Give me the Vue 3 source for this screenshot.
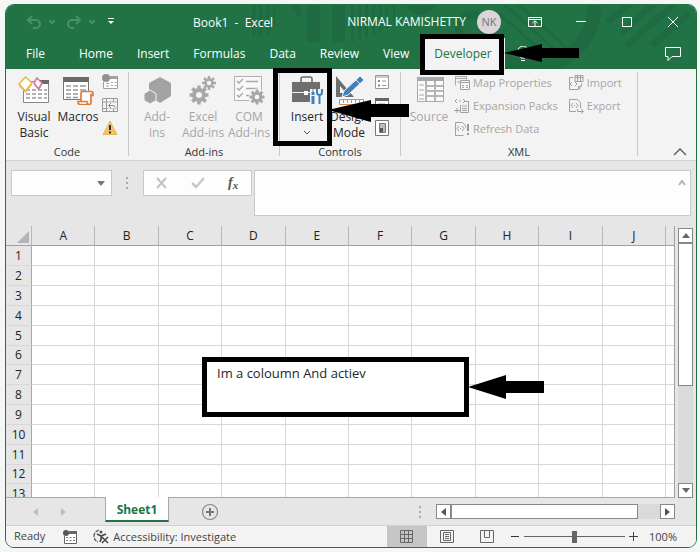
<script setup>
import { ref } from 'vue'

const tabs = ['File', 'Home', 'Insert', 'Formulas', 'Data', 'Review', 'View', 'Developer']
const activeTab = ref('Developer')
const columns = 'ABCDEFGHIJ'.split('')
const rows = Array.from({ length: 13 }, (_, i) => i + 1)
const cellName = ref('')
const formula = ref('')
const zoom = ref(50)
const gear = [0, 45, 90, 135]
</script>

<template>
  <main class="page">
    <div class="window">
      <header class="chrome">
        <svg class="pattern" viewBox="0 0 692 65" preserveAspectRatio="xMinYMin slice" aria-hidden="true">
          <g fill="#1f6a41">
            <path d="M247 0h3v32h-3zM254 0h3v32h-3zM261 0h3v32h-3zM268 0h2v20h-2zM284 0h12v14zM302 0h13v37h-13zM327 0h13v37h-13zM346 0h3v37h-3zM353 0h3v35h-3zM360 0h3v33h-3zM367 0h3v30h-3zM374 0h3v27h-3zM381 0h2v24h-2zM388 0h2v20h-2zM402 0h28q-4 10-14 10t-14-10z" />
            <path d="M618 0h10l-22 19-5-4zM644 0h9l-33 30-5-4zM664 0h10l-50 44-5-5zM683 6l4 5-36 32-6-5z" />
          </g>
          <g fill="none" stroke="#1f6a41">
            <path d="M598 0a62 62 0 0 1-90 56" stroke-width="14" transform="translate(-8)" />
            <path d="M500 0l56 50M510 -4l58 52M495 9l48 42" stroke-width="3" />
            <circle cx="467" cy="23" r="13" stroke-width="8" />
          </g>
        </svg>

        <div class="titlebar">
          <div class="quick">
            <button aria-label="Undo" class="dim"><svg width="16" height="14" viewBox="0 0 16 14"><path d="M6 1L2 5l4 4M2 5h8a4 4 0 0 1 0 8H7" /></svg></button>
            <button aria-label="Undo history" class="dim"><svg width="6" height="4" viewBox="0 0 6 4"><path d="M0 0l3 3 3-3" /></svg></button>
            <button aria-label="Redo" class="dim"><svg width="16" height="14" viewBox="0 0 16 14"><path d="M10 1l4 4-4 4M14 5H6a4 4 0 0 0 0 8h2" /></svg></button>
            <button aria-label="Redo history" class="dim"><svg width="6" height="4" viewBox="0 0 6 4"><path d="M0 0l3 3 3-3" /></svg></button>
            <button aria-label="Customize toolbar" class="custom"><svg width="6" height="7" viewBox="0 0 6 7"><path d="M0 .5h6" /><path d="M0 3h6L3 6z" fill="#fff" stroke="none" /></svg></button>
          </div>
          <h1 class="doc">Book1&nbsp; -&nbsp; Excel</h1>
          <div class="account">
            <span>NIRMAL KAMISHETTY</span>
            <button class="avatar">NK</button>
          </div>
          <div class="controls">
            <button aria-label="Ribbon display options"><svg width="14" height="12" viewBox="0 0 14 12"><path d="M.5 1.500h13v9H.5zM.5 3.500h13M7 10V5M4.500 7L7 4.800 9.500 7" /></svg></button>
            <button aria-label="Minimize"><svg width="12" height="12" viewBox="0 0 12 12"><path d="M1 5.500h10" /></svg></button>
            <button aria-label="Maximize"><svg width="12" height="12" viewBox="0 0 12 12"><path d="M1.500 1.500h9v9h-9z" /></svg></button>
            <button aria-label="Close"><svg width="12" height="12" viewBox="0 0 12 12"><path d="M1 1l10 10M11 1L1 11" /></svg></button>
          </div>
        </div>

        <nav class="tabs" aria-label="Ribbon tabs">
          <button v-for="t in tabs" :key="t" :class="{ active: t === activeTab }" @click="activeTab = t">{{ t }}</button>
          <button class="tell" aria-label="Tell me"><svg width="12" height="16" viewBox="0 0 12 16"><path d="M4 12V10Q1 8 1 5a5 5 0 0 1 10 0q0 3-3 5v2zM4 14.500h4" /></svg></button>
          <button class="comment" aria-label="Comments"><svg width="18" height="16" viewBox="0 0 18 16"><path d="M1.500 1.500h15v9H8l-4 4v-4H1.500z" /></svg></button>
        </nav>
      </header>

      <section class="ribbon" aria-label="Developer">
        <div class="group code">
          <div class="tools">
            <button class="big">
              <svg width="32" height="29" viewBox="0 0 32 29">
                <path d="M5.500 5.500h25v21h-25z" fill="#fff" stroke="#8a8a8a" />
                <path d="M22 4h9v4h-9z" fill="#6b6b6b" />
                <path d="M8 14h4M14 14h4M20 14h4M26 14h3M8 18h4M14 18h4M20 18h4M26 18h3M8 22h4M14 22h4M20 22h4M26 22h3" stroke="#9a9a9a" stroke-width="1.500" />
                <path d="M1 8l6.500 7L14 7v2l-6.500 8L1 10z" fill="#e8bd58" />
                <path d="M7.500 1l6.500 6-6.500 8L1 8z" fill="#fff" stroke="#e8b84a" stroke-width="1.600" />
                <path d="M16 7l5 5 3-5v2l-3 5-5-5z" fill="#df819d" />
                <path d="M19 2l5 5-3.500 6L16 7z" fill="#fff" stroke="#d97593" stroke-width="1.500" />
              </svg>
              <span>Visual<br />Basic</span>
            </button>
            <button class="big">
              <svg width="32" height="29" viewBox="0 0 32 29">
                <path d="M1.500 2.500h25v21h-25z" fill="#fff" stroke="#777" />
                <path d="M1 1h26v5H1z" fill="#6b6b6b" />
                <path d="M4 10h5M11 10h5M18 10h6M4 14h5M11 14h5M18 14h6M4 18h5M11 18h5M4 21.500h5M11 21.500h5" stroke="#999" stroke-width="1.500" />
                <path d="M20.500 15.500h9q1.500 0 1.500 2v2h-2v7q0 2-2 2h-9q-2 0-2-3h3v-8q0-2 1.500-2z" fill="#fff" stroke="#e07b35" stroke-width="1.700" />
                <path d="M19 25.500h6q0 3 2 3M29 19.500v-2" fill="none" stroke="#e07b35" stroke-width="1.500" />
              </svg>
              <span>Macros</span>
            </button>
            <div class="stack">
              <button aria-label="Record Macro"><svg width="16" height="16" viewBox="0 0 16 16"><path d="M1.500 8v6.500h14v-12H8" fill="#fff" stroke="#a0a0a0" /><path d="M8 2h8v3H8z" fill="#a0a0a0" /><circle cx="4" cy="4" r="4" fill="#929292" /><path d="M4 9.500h3M9 8.500h2M12.500 8.500h2M4 12h3M9 11.500h2M12.500 11.500h2" stroke="#a0a0a0" /></svg></button>
              <button aria-label="Use Relative References"><svg width="16" height="16" viewBox="0 0 16 16"><path d="M.5 1.500h15v13H.5zM.5 5h15M.5 11.500h15M4.500 1v14M11.500 1v4M11.500 11v4" fill="none" stroke="#999" /><path d="M5 5.500h10v6H5z" fill="#f3f3f3" /><path d="M9 6L6.500 8.500 9 11M7 8.500h4q2 0 2 2" fill="none" stroke="#888" /></svg></button>
              <button aria-label="Macro Security"><svg width="16" height="16" viewBox="0 0 16 16"><path d="M8 1l7 13.500H1z" fill="#efc36b" stroke="#e7b75c" stroke-linejoin="round" /><path d="M8 5v5M8 11.500v2" stroke="#333" stroke-width="2" /></svg></button>
            </div>
          </div>
          <h2>Code</h2>
        </div>

        <div class="group addins">
          <div class="tools">
            <button class="big off">
              <svg width="32" height="29" viewBox="0 0 32 29"><path d="M19 1l11 6v13l-11 7-11-7V7z" fill="#a3a3a3" /><path d="M9 14l6 3.500v7L9 28l-6-3.500v-7z" fill="#a3a3a3" stroke="#f3f3f3" /></svg>
              <span>Add-<br />ins</span>
            </button>
            <button class="big off">
              <svg width="32" height="29" viewBox="0 0 32 29">
                <g stroke="#a8a8a8" fill="none">
                  <g transform="translate(12 19)"><circle r="5" stroke-width="4" /><path v-for="a in gear" :key="a" d="M0-9.500v4M0 5.500v4" :transform="`rotate(${a})`" stroke-width="3.500" /></g>
                  <g transform="translate(22 7)"><circle r="3.500" stroke-width="2.500" /><path v-for="a in gear" :key="a" d="M0-7v3M0 4v3" :transform="`rotate(${a})`" stroke-width="2.500" /></g>
                </g>
              </svg>
              <span>Excel<br />Add-ins</span>
            </button>
            <button class="big off">
              <svg width="32" height="29" viewBox="0 0 32 29">
                <path d="M1.500.5h27v24h-27z" fill="#f8f8f8" stroke="#b5b0b8" />
                <path d="M4 5l2 2 4-4M4 12l2 2 4-4M4 19l2 2 4-4M13 5.500h12M13 12.500h12M13 19.500h6" fill="none" stroke="#aaa3ad" stroke-width="1.300" />
                <g transform="translate(24 21)" fill="none" stroke="#a8a8a8"><circle r="5.500" stroke="#f3f3f3" stroke-width="6" /><circle r="3.800" stroke-width="3" /><path v-for="a in gear" :key="a" d="M0-7.500v3M0 4.500v3" :transform="`rotate(${a})`" stroke-width="3" /></g>
              </svg>
              <span>COM<br />Add-ins</span>
            </button>
          </div>
          <h2>Add-ins</h2>
        </div>

        <div class="group ctrl">
          <div class="tools">
            <button class="big">
              <svg width="32" height="29" viewBox="0 0 32 29">
                <path d="M10 6V3q0-2 2-2h7q2 0 2 2v3" fill="none" stroke="#6b6b6b" stroke-width="1.600" />
                <path d="M1 6h28v20H1z" fill="#6e6e6e" /><path d="M1 16.500h12M17 16.500h5" stroke="#f3f3f3" /><path d="M13 15h4v4h-4z" fill="#fff" />
                <path d="M19 13h13v16H19z" fill="#f3f3f3" />
                <path d="M22 28v-8M22 19v-3" stroke="#3f80bd" stroke-width="3" /><path d="M22 17v-4" stroke="#3f80bd" />
                <path d="M28.500 28V19M26 13v3q0 3 2.500 3t2.500-3v-3" fill="none" stroke="#3f80bd" stroke-width="2" />
              </svg>
              <span>Insert<svg class="drop" width="6" height="4" viewBox="0 0 6 4"><path d="M0 0l3 3 3-3" fill="none" stroke="#555" /></svg></span>
            </button>
            <button class="big">
              <svg width="32" height="29" viewBox="0 0 32 29">
                <path d="M3 0v21h18z" fill="#6e6e6e" /><path d="M7 10v7h6z" fill="#f3f3f3" />
                <path d="M6.500 23.500h24v5h-24z" fill="#fff" stroke="#e08a4b" /><path d="M10.500 24v3M14.500 24v3M18.500 24v3M22.500 24v3M26.500 24v3" stroke="#e08a4b" />
                <path d="M27 0l4 4-16 15-6 2 2-6z" fill="#3f80bd" stroke="#f3f3f3" /><path d="M23 4l4 4" stroke="#f3f3f3" />
              </svg>
              <span>Design<br />Mode</span>
            </button>
            <div class="stack">
              <button aria-label="Properties"><svg width="16" height="16" viewBox="0 0 16 16"><path d="M1.500 1.500h13v13h-13zM1 3h14" fill="#fff" stroke="#999" /><path d="M4 6h2v2H4zM4 10.500h2v2H4z" fill="#888" /><path d="M8 7h4M8 11.500h4" stroke="#999" /></svg></button>
              <button aria-label="View Code"><svg width="16" height="16" viewBox="0 0 16 16"><path d="M1.500 1.500h13v13h-13z" fill="#fff" stroke="#777" /><path d="M1 1h14v3H1z" fill="#666" /><path d="M4 7h7M4 10h7" stroke="#888" /></svg></button>
              <button aria-label="Run Dialog"><svg width="16" height="16" viewBox="0 0 16 16"><path d="M1.500.5h13v15h-13z" fill="#fff" stroke="#777" /><path d="M5.500 3.500h6v9h-6z" fill="#bbb" stroke="#777" /><path d="M6 8h3v4H6z" fill="#555" /></svg></button>
            </div>
          </div>
          <h2>Controls</h2>
        </div>

        <div class="group xml">
          <div class="tools">
            <button class="big off">
              <svg width="32" height="29" viewBox="0 0 32 29"><path d="M4.500 1.500h26v24h-26z" fill="#fafafa" stroke="#aaa" /><path d="M4 1h27v4H4z" fill="#a8a8a8" /><path d="M13 5v20M22 5v20M13 10h17M13 15h17M13 20h17" stroke="#b5b5b5" stroke-width="2" /><path d="M6 9h5M6 14h5M6 19h5M6 23h5" stroke="#aaa" /></svg>
              <span>Source</span>
            </button>
            <div class="lines">
              <button><svg width="17" height="16" viewBox="0 0 17 16"><path d="M1.500 10.500v-9h11v3M1 3.500h12M3 7h3" fill="none" stroke="#a8a8a8" /><path d="M6.500 5.500h9v9h-9zM6 7.500h10M8 10.500h2M12 10.500h2M8 12.500h2M12 12.500h2" fill="#f8f8f8" stroke="#a0a0a0" /></svg>Map Properties</button>
              <button><svg width="17" height="16" viewBox="0 0 17 16"><path d="M3 1L1 3l2 2M9 1l2 2-2 2M5 3h2M11 3.500h3.500v11h-8V7M8 8h5M8 10.500h5M8 12.500h5M0 12.500h6M3 10v5" fill="none" stroke="#a0a0a0" /></svg>Expansion Packs</button>
              <button><svg width="17" height="16" viewBox="0 0 17 16"><path d="M9.500 14.500h-8v-13h7l3 3v2M5 5L3 7.500 5 10M8 5l2 2.500L8 10M6 7.500h1" fill="none" stroke="#a0a0a0" /><path d="M14 3v7M14 12v2" stroke="#999" stroke-width="2" /></svg>Refresh Data</button>
            </div>
            <div class="lines">
              <button><svg width="17" height="16" viewBox="0 0 17 16"><path d="M5 2.500H1.500v12h9V11M7 .5h8v6H7zM7 2.500h8M9.500 1v5M12.500 1v5M4 7l-2 2 2 2M7 7l2 2-2 2M13.500 8.500v2q0 2-2 2M10.500 12.500l2-2M10.500 12.500l2 2" fill="none" stroke="#a0a0a0" /></svg>Import</button>
              <button><svg width="17" height="16" viewBox="0 0 17 16"><path d="M8 13.500H1.500v-12h8l3 3V10M5 5L3 7.500 5 10M8 5l2 2.500L8 10M6 7.500h1M9.500 11v2.500H15M13 11l2.500 2.500-2.500 2" fill="none" stroke="#a0a0a0" /></svg>Export</button>
            </div>
          </div>
          <h2>XML</h2>
        </div>
        <button class="collapse" aria-label="Collapse ribbon"><svg width="14" height="8" viewBox="0 0 14 8"><path d="M1 7l6-6 6 6" fill="none" stroke="#555" stroke-width="1.300" /></svg></button>
      </section>

      <section class="formulabar" aria-label="Formula bar">
        <div class="namebox">
          <input v-model="cellName" aria-label="Name box" />
          <button aria-label="Names"><svg width="8" height="5" viewBox="0 0 8 5"><path d="M0 0h8L4 5z" fill="#777" /></svg></button>
        </div>
        <svg class="dots" width="3" height="12" viewBox="0 0 3 12" aria-hidden="true"><path d="M0 0h2v2H0zM0 5h2v2H0zM0 10h2v2H0z" fill="#aaa" /></svg>
        <div class="fxbox">
          <button aria-label="Cancel"><svg width="12" height="12" viewBox="0 0 12 12"><path d="M1 1l9 10M10 1L1 11" fill="none" stroke="#c2c2c2" stroke-width="2" /></svg></button>
          <button aria-label="Enter"><svg width="14" height="12" viewBox="0 0 14 12"><path d="M1 6l4 4 8-9" fill="none" stroke="#c8c8c8" stroke-width="2.500" /></svg></button>
          <button class="fx" aria-label="Insert function">f<small>x</small></button>
        </div>
        <div class="formula">
          <textarea v-model="formula" aria-label="Formula"></textarea>
          <button aria-label="Collapse formula bar"><svg width="8" height="6" viewBox="0 0 8 6"><path d="M1 5l3-4 3 4" fill="none" stroke="#b5b5b5" stroke-width="2" /></svg></button>
        </div>
      </section>

      <section class="sheet">
        <div class="viewport">
          <table>
            <colgroup><col class="rowhead" /><col v-for="c in columns" :key="c" /><col class="last" /></colgroup>
            <thead>
              <tr>
                <th class="corner"><svg width="12" height="12" viewBox="0 0 12 12" aria-hidden="true"><path d="M12 0v12H0z" fill="#b4b4b4" /></svg></th>
                <th v-for="c in columns" :key="c" scope="col">{{ c }}</th>
                <th></th>
              </tr>
            </thead>
            <tbody>
              <tr v-for="r in rows" :key="r">
                <th scope="row">{{ r }}</th>
                <td v-for="c in columns" :key="c"></td>
                <td></td>
              </tr>
            </tbody>
          </table>
        </div>
        <div class="vscroll">
          <button aria-label="Scroll up"><svg width="8" height="5" viewBox="0 0 8 5"><path d="M4 0l4 5H0z" fill="#666" /></svg></button>
          <div class="vthumb"></div>
          <button class="down" aria-label="Scroll down"><svg width="8" height="5" viewBox="0 0 8 5"><path d="M0 0h8L4 5z" fill="#666" /></svg></button>
        </div>
      </section>

      <section class="sheetbar">
        <div class="sheetnav">
          <button aria-label="Previous sheet"><svg width="5" height="8" viewBox="0 0 5 8"><path d="M5 0v8L0 4z" fill="#bdbdbd" /></svg></button>
          <button aria-label="Next sheet"><svg width="5" height="8" viewBox="0 0 5 8"><path d="M0 0v8l5-4z" fill="#bdbdbd" /></svg></button>
        </div>
        <button class="sheettab">Sheet1</button>
        <button class="add" aria-label="New sheet"><svg width="18" height="18" viewBox="0 0 18 18"><circle cx="9" cy="9" r="7.500" fill="none" stroke="#888" stroke-width="1.200" /><path d="M9 5v8M5 9h8" stroke="#777" stroke-width="2" /></svg></button>
        <svg class="dots" width="3" height="12" viewBox="0 0 3 12" aria-hidden="true"><path d="M0 0h2v2H0zM0 5h2v2H0zM0 10h2v2H0z" fill="#aaa" /></svg>
        <div class="hscroll">
          <button aria-label="Scroll left"><svg width="5" height="8" viewBox="0 0 5 8"><path d="M5 0v8L0 4z" fill="#555" /></svg></button>
          <div class="hthumb"></div>
          <button class="right" aria-label="Scroll right"><svg width="5" height="8" viewBox="0 0 5 8"><path d="M0 0v8l5-4z" fill="#555" /></svg></button>
        </div>
      </section>

      <footer class="status">
        <span class="ready">Ready</span>
        <button class="rec" aria-label="Record macro"><svg width="14" height="14" viewBox="0 0 14 14"><path d="M1.500 6v7.500h12v-11H6" fill="#fff" stroke="#666" /><path d="M6 1h8v3H6z" fill="#666" /><circle cx="3" cy="3" r="3" fill="#555" /><path d="M3 7.500h2M6.500 7.500h2M10 7.500h2M3 10.500h2M6.500 10.500h2M10 10.500h2" stroke="#777" /></svg></button>
        <button class="access">
          <svg width="16" height="15" viewBox="0 0 16 15"><path d="M6 1Q1 3 1 7q0 4 4 6" fill="none" stroke="#555" stroke-width="1.300" stroke-dasharray="4 1" /><path d="M4 5l4 2q1 2-1 6M8 7l5-2M9 8l6 6M15 8l-6 6" fill="none" stroke="#444" stroke-width="1.500" /><circle cx="8" cy="3" r="1.500" fill="#555" /></svg>Accessibility: Investigate</button>
        <div class="views">
          <button class="on" aria-label="Normal view"><svg width="14" height="14" viewBox="0 0 14 14"><path d="M.5.500h12v12H.5zM.5 4.500h12M.5 8.500h12M4.500.5v12M8.500.5v12" fill="none" stroke="#666" /></svg></button>
          <button aria-label="Page layout"><svg width="14" height="14" viewBox="0 0 14 14"><path d="M.5.500h13v12H.5zM3.500 2.500h7v8h-7zM5 4.500h4M5 6.500h4M5 8.500h4" fill="none" stroke="#666" /></svg></button>
          <button aria-label="Page break preview"><svg width="14" height="14" viewBox="0 0 14 14"><path d="M.5.500h13v12H.5zM4.500.500v7h5v-7" fill="none" stroke="#666" /></svg></button>
        </div>
        <div class="zoom">
          <button aria-label="Zoom out"><svg width="9" height="9" viewBox="0 0 9 9"><path d="M0 4.500h8" stroke="#333" /></svg></button>
          <input v-model="zoom" type="range" min="0" max="100" aria-label="Zoom" />
          <button aria-label="Zoom in"><svg width="9" height="9" viewBox="0 0 9 9"><path d="M0 4.500h9M4.500 0v9" stroke="#444" /></svg></button>
          <span>100%</span>
        </div>
      </footer>
    </div>

    <div class="mark mark-tab"></div>
    <div class="mark mark-insert"></div>
    <div class="mark mark-note">Im a coloumn And actiev</div>
    <svg class="arrow arrow-tab" width="75" height="20" viewBox="0 0 75 20" aria-hidden="true"><path d="M0 10L38 1v4h37v10H38v4z" /></svg>
    <svg class="arrow arrow-insert" width="82" height="22" viewBox="0 0 82 22" aria-hidden="true"><path d="M0 10L43 0v4h38v13H43v5z" /></svg>
    <svg class="arrow arrow-note" width="76" height="24" viewBox="0 0 76 24" aria-hidden="true"><path d="M0 12L38 0v6h38v12H38v6z" /></svg>
  </main>
</template>

<style>
body { background: #f4f7f5; }
</style>

<style scoped>
* { box-sizing: border-box; }
.page {
  position: relative;
  height: 100vh;
  min-height: 400px;
  padding: 4px 3px 4px 5px;
  font-family: "Open Sans", "Noto Sans", sans-serif;
  font-size: 12px;
  line-height: 16px;
  color: #262626;
}
button, input, textarea { font: inherit; color: inherit; border: 0; padding: 0; margin: 0; background: none; outline: 0; }
button { display: flex; align-items: center; justify-content: center; white-space: nowrap; }
svg { display: block; flex: none; }
h1, h2 { margin: 0; font-weight: 400; font-size: 12px; }
.window {
  display: flex;
  flex-direction: column;
  height: 100%;
  border: 1px solid #217346;
  border-radius: 9px;
  overflow: hidden;
  background: #e6e6e6;
}

.chrome { position: relative; flex: none; background: #217346; color: #fff; }
.pattern { position: absolute; inset: 0; width: 100%; height: 100%; }
.chrome svg { stroke: #fff; fill: none; }
.chrome .pattern { stroke: none; }
.titlebar { position: relative; display: flex; align-items: center; height: 33px; }
.quick { display: flex; align-items: center; width: 187px; padding-left: 20px; gap: 7px; }
.quick .dim svg { stroke: #4a8f68; stroke-width: 2; }
.quick .dim:nth-child(3) { margin-left: 4px; }
.quick .custom { margin-left: 6px; }
.doc { padding-top: 2px; }
.account { display: flex; align-items: center; gap: 11px; margin-left: auto; }
.avatar { width: 24px; height: 24px; border-radius: 50%; background: #d9d5d9; color: #777; font-size: 11px; }
.controls { display: flex; margin-left: 11px; }
.controls button { width: 46px; height: 32px; }
.tabs { position: relative; display: flex; height: 31px; padding-left: 8px; }
.tabs button { padding: 0 12px; }
.tabs button:first-child { margin-right: 10px; }
.tabs .active { background: #f3f3f3; color: #217346; padding: 0 13px; }
.tabs .comment { margin-left: auto; padding: 0 14px; }

.ribbon { display: flex; flex: none; height: 92px; background: #f3f3f3; border-bottom: 1px solid #d2d2d2; }
.group { display: flex; flex-direction: column; justify-content: space-between; margin: 3px 0 4px; border-right: 1px solid #c8c8c8; }
.group h2 { text-align: center; font-size: 11px; line-height: 8px; color: #333; }
.tools { display: flex; padding-left: 6px; }
.code { width: 123px; }
.addins { width: 151px; }
.ctrl { width: 121px; }
.xml { width: 237px; }
.big { flex-direction: column; justify-content: flex-start; width: 44px; padding-top: 4px; gap: 4px; }
.off { color: #a6a6a6; }
.addins .tools { padding-left: 5px; }
.addins .big { width: 46px; }
.ctrl .big { width: 42px; }
.drop { margin: 6px auto 0; }
.stack { display: flex; flex-direction: column; gap: 7px; padding: 2px 0 0 2px; }
.ctrl .stack { padding-left: 4px; }
.lines { display: flex; flex-direction: column; gap: 7px; margin-left: 3px; padding-top: 3px; font-size: 11px; color: #a6a6a6; }
.lines + .lines { margin-left: 10px; }
.lines button { justify-content: flex-start; gap: 2px; }
.collapse { align-self: flex-end; margin: 0 9px 4px auto; }

.formulabar { display: flex; flex: none; align-items: flex-start; height: 65px; padding: 9px 5px 0; }
.namebox, .fxbox, .formula { display: flex; background: #fdfdfd; border: 1px solid #c8c8c8; }
.namebox { width: 101px; height: 26px; }
.namebox input { flex: 1; min-width: 0; }
.namebox button { width: 20px; }
.dots { margin: 7px 14px 0; }
.fxbox { width: 109px; height: 26px; }
.fxbox button { flex: 1; }
.fxbox .fx { font: italic 700 14px "Liberation Serif", serif; color: #555; }
.fx small { font-size: 11px; padding-top: 4px; }
.formula { flex: 1; height: 46px; margin-left: 2px; }
.formula textarea { flex: 1; resize: none; }
.formula button { width: 16px; height: 24px; }

.sheet { display: flex; flex: 1; min-height: 0; }
.viewport { flex: 1; overflow: hidden; background: #fff; border-right: 1px solid #a0a0a0; border-bottom: 1px solid #a8a8a8; }
table { width: 100%; table-layout: fixed; border-collapse: separate; border-spacing: 0; }
.rowhead { width: 26px; }
.last { width: 8px; }
th, td { padding: 0; height: 20px; line-height: 16px; border-right: 1px solid #d8d8d8; border-bottom: 1px solid #d8d8d8; }
th { font-weight: 400; background: #e6e6e6; color: #222; }
thead th { border-bottom-color: #a0a0a0; border-right-color: #b8b8b8; }
tbody th { border-right-color: #a8a8a8; }
tbody tr:nth-child(6n) > * { height: 19px; }
tr > :last-child { border-right: 0; }
.corner svg { margin: 3px 0 0 11px; }
.vscroll { display: flex; flex-direction: column; width: 15px; margin: 2px 3px 0; background: #dadada; }
.vscroll button, .hscroll button { flex: none; width: 15px; height: 15px; background: #fff; border: 1px solid #888; }
.vthumb { height: 143px; background: #fff; border: 1px solid #888; }
.vscroll .down { margin-top: auto; }

.sheetbar { display: flex; flex: none; align-items: center; height: 27px; }
.sheetnav { display: flex; width: 99px; padding-left: 27px; gap: 23px; }
.sheettab { align-self: flex-start; position: relative; width: 64px; height: 25px; margin-top: -1px; padding-top: 3px; background: #fff; border: 1px solid #a8a8a8; border-top: 0; border-bottom: 2px solid #217346; color: #217346; font-weight: 700; }
.add { margin-left: 32px; }
.sheetbar .dots { margin: 0 14px 0 auto; }
.hscroll { display: flex; width: 239px; height: 15px; margin-right: 21px; background: #dadada; }
.hthumb { width: 187px; background: #fff; border: 1px solid #888; }
.hscroll .right { margin-left: auto; }

.status { display: flex; flex: none; align-items: stretch; height: 22px; padding-right: 19px; background: #f3f3f3; border-top: 1px solid #d0d0d0; font-size: 11px; line-height: 20px; color: #444; }
.ready { padding-left: 8px; }
.rec { margin-left: 18px; }
.access { margin-left: 16px; gap: 4px; }
.views { display: flex; margin-left: auto; }
.views button { width: 40px; }
.views .on { background: #c6c6c6; }
.zoom { display: flex; align-items: center; gap: 4px; margin-left: 4px; }
.zoom input { appearance: none; width: 101px; height: 12px; background: linear-gradient(#666, #666) center / 100% 1px no-repeat; }
.zoom input::-webkit-slider-thumb { appearance: none; width: 5px; height: 12px; background: #666; border: 0; }
.zoom span { margin-left: 7px; }

.mark { position: absolute; border: 5px solid #000; }
.mark-tab { left: 420px; top: 34px; width: 84px; height: 41px; }
.mark-insert { left: 273px; top: 68px; width: 59px; height: 78px; }
.mark-note { left: 202px; top: 357px; width: 267px; height: 60px; padding: 3px 10px; background: #fff; font-size: 13px; }
.arrow { position: absolute; }
.arrow-tab { left: 504px; top: 43px; }
.arrow-insert { left: 328px; top: 100px; }
.arrow-note { left: 468px; top: 375px; }
</style>
